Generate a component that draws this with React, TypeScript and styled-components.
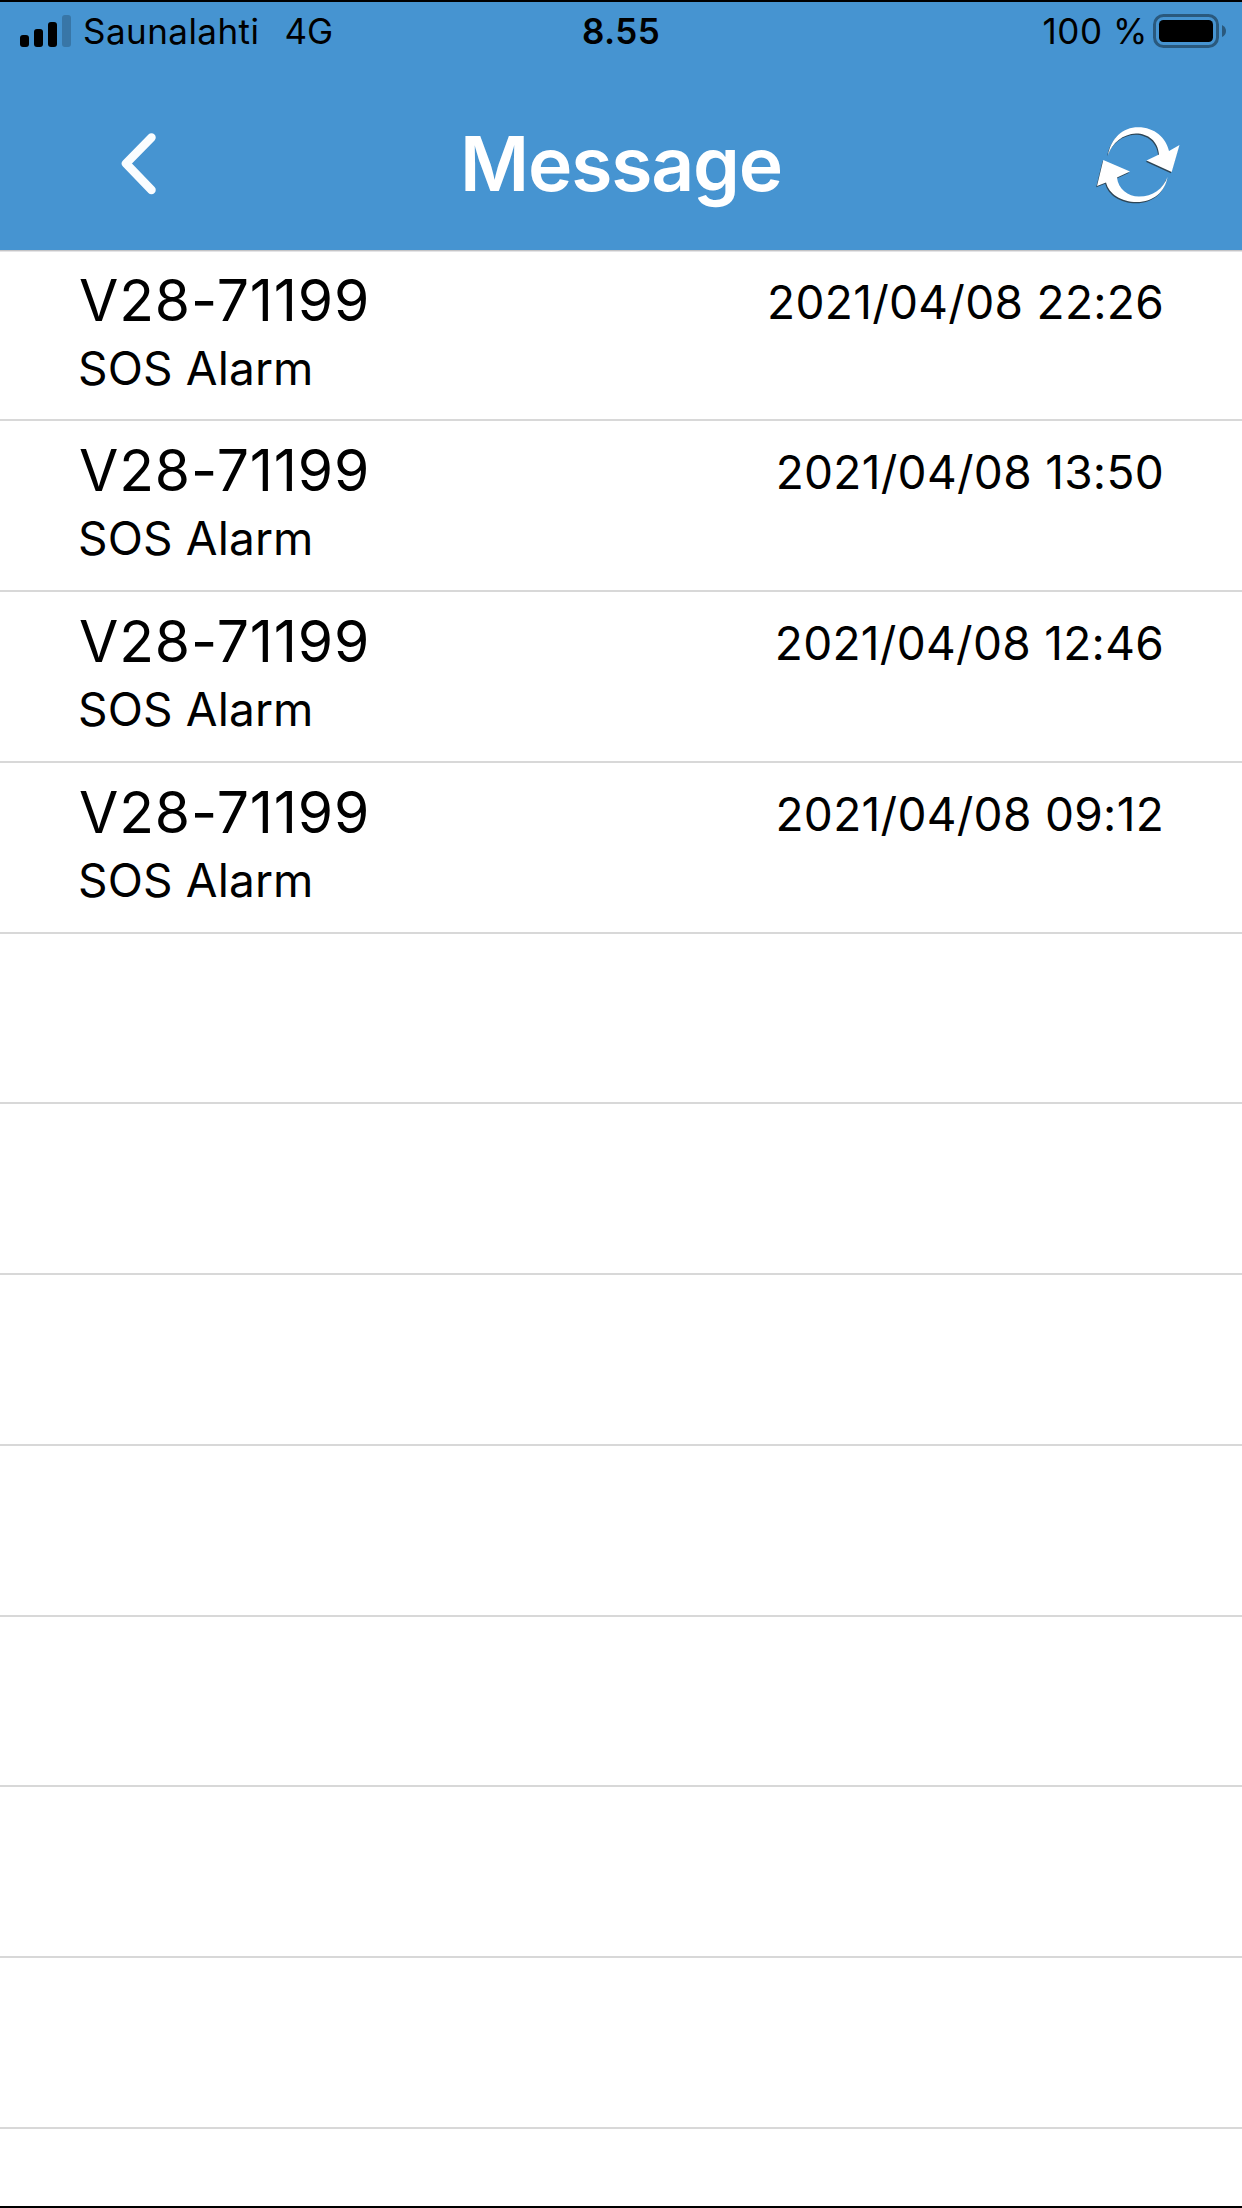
import React from 'react';
import styled, { createGlobalStyle } from 'styled-components';

const GlobalStyle = createGlobalStyle`
  *, *::before, *::after { box-sizing: border-box; }
  html, body { margin: 0; padding: 0; background: #fff; }
  body { font-family: Inter, Roboto, "Liberation Sans", sans-serif; overflow: hidden; }
`;

const Screen = styled.div`
  display: flex;
  flex-direction: column;
  width: 1242px;
  height: 2208px;
  overflow: hidden;
  background: #fff;
  color: #000;
  border-top: 2px solid #000;
  border-bottom: 2px solid #000;
`;

const Header = styled.header`
  flex: none;
  height: 248px;
  background: #4694d1;
`;

const StatusBar = styled.div`
  display: grid;
  grid-template-columns: 1fr auto 1fr;
  align-items: center;
  height: 58px;
  padding: 0 16px 0 20px;
  font-size: 35px;
  line-height: 58px;
`;

const StatusGroup = styled.div<{ $end?: boolean }>`
  display: flex;
  align-items: center;
  justify-content: ${(p) => (p.$end ? 'flex-end' : 'flex-start')};
`;

const StatusText = styled.span<{ $gap: number; $spacing: number }>`
  margin-left: ${(p) => p.$gap}px;
  letter-spacing: ${(p) => p.$spacing}px;
  white-space: nowrap;
`;

const Clock = styled.span`
  margin-right: 4px;
  font-weight: 600;
  letter-spacing: 0.4px;
`;

const BatteryIcon = styled.svg`
  display: block;
  margin-left: 5px;
`;

const NavBar = styled.nav`
  display: grid;
  grid-template-columns: 1fr auto 1fr;
  align-items: center;
  height: 190px;
  padding: 17px 60px 0;
`;

const Title = styled.h1`
  margin: 0;
  color: #fff;
  font-size: 75px;
  font-weight: 600;
  letter-spacing: -1.2px;
  line-height: 90px;
`;

const BackButton = styled.button`
  display: flex;
  justify-self: start;
  margin-left: 56px;
  padding: 0 0 2px;
  border: 0;
  background: none;
`;

const RefreshButton = styled.button`
  display: flex;
  justify-self: end;
  padding: 7px 0 0;
  border: 0;
  background: none;
`;

const List = styled.ul`
  flex: 1;
  margin: 0;
  padding: 0.5px 0 0;
  list-style: none;
  overflow: hidden;
  box-shadow: inset 0 1px #c4c4c6, inset 0 2px #e4e4e6;
`;

const Row = styled.li`
  display: flex;
  justify-content: space-between;
  height: 170.77px;
  padding: 14px 78px 0 78px;
  border-bottom: 2px solid #d8d8d8;
`;

const Device = styled.div`
  padding-left: 1px;
  font-size: 57px;
  letter-spacing: 0.85px;
  line-height: 71px;
`;

const Kind = styled.div`
  font-size: 46px;
  letter-spacing: 0.15px;
  line-height: 64px;
`;

const Time = styled.time`
  padding-top: 4px;
  font-size: 46px;
  letter-spacing: 0.3px;
  line-height: 67px;
`;

const messages = [
  { device: 'V28-71199', kind: 'SOS Alarm', time: '2021/04/08 22:26' },
  { device: 'V28-71199', kind: 'SOS Alarm', time: '2021/04/08 13:50' },
  { device: 'V28-71199', kind: 'SOS Alarm', time: '2021/04/08 12:46' },
  { device: 'V28-71199', kind: 'SOS Alarm', time: '2021/04/08 09:12' },
];

const emptyRows = Array.from({ length: 8 }, (_, i) => i);

function Signal() {
  return (
    <svg width="51" height="32" viewBox="0 0 51 32">
      <rect x="0" y="20" width="9" height="12" rx="3" />
      <rect x="14" y="14" width="9" height="18" rx="3" />
      <rect x="28" y="7" width="9" height="25" rx="3" />
      <rect x="42" y="0" width="9" height="32" rx="3" fill="#3876a7" />
    </svg>
  );
}

function Battery() {
  return (
    <BatteryIcon width="73" height="34" viewBox="0 0 73 34">
      <rect x="1.5" y="1.5" width="63" height="31" rx="9" fill="none" stroke="#2a597d" strokeWidth="3" />
      <rect x="6" y="6" width="54" height="22" rx="4.5" />
      <path d="M69 11 Q73 13 73 17 Q73 21 69 23 Z" fill="#2a597d" />
    </BatteryIcon>
  );
}

function Chevron() {
  return (
    <svg width="48" height="64" viewBox="0 0 48 64">
      <path d="M35.500 6.500 L10 32.500 L35.500 59" fill="none" stroke="#fafdff" strokeWidth="8.500" strokeLinecap="round" strokeLinejoin="round" />
    </svg>
  );
}

const arrows = [
  'M12 29 C15 12 27 1.300 42 1.300 C59 1.300 70 12 73 25 L83.500 19 L75.700 46 L50.500 34.500 L63 28.500 C62 15 52 7.500 40 7.500 C27 8 16 17 12 29 Z',
  'M7.300 34 L34 45.500 L21 51.500 C22 63 32 70.500 43 70.500 C57 70.500 67 63 71.500 51 C69 66 57 76 41 76 C25 76 13 68 10 56.500 L1 60 Z',
];

function Refresh() {
  return (
    <svg width="86" height="82" viewBox="0 0 86 82">
      {arrows.map((d) => (
        <path key={d} d={d} transform="translate(-0.8 1.2)" fill="#2d4555" />
      ))}
      {arrows.map((d) => (
        <path key={d} d={d} fill="#fff" />
      ))}
    </svg>
  );
}

export default function App() {
  return (
    <>
      <GlobalStyle />
      <Screen>
        <Header>
          <StatusBar>
            <StatusGroup>
              <Signal />
              <StatusText $gap={12} $spacing={0.45}>Saunalahti</StatusText>
              <StatusText $gap={25} $spacing={0}>4G</StatusText>
            </StatusGroup>
            <Clock>8.55</Clock>
            <StatusGroup $end>
              <StatusText $gap={0} $spacing={0.6}>100 %</StatusText>
              <Battery />
            </StatusGroup>
          </StatusBar>
          <NavBar>
            <BackButton aria-label="Back"><Chevron /></BackButton>
            <Title>Message</Title>
            <RefreshButton aria-label="Refresh"><Refresh /></RefreshButton>
          </NavBar>
        </Header>
        <List>
          {messages.map((m) => (
            <Row key={m.time}>
              <div>
                <Device>{m.device}</Device>
                <Kind>{m.kind}</Kind>
              </div>
              <Time>{m.time}</Time>
            </Row>
          ))}
          {emptyRows.map((i) => (
            <Row key={i} />
          ))}
        </List>
      </Screen>
    </>
  );
}
